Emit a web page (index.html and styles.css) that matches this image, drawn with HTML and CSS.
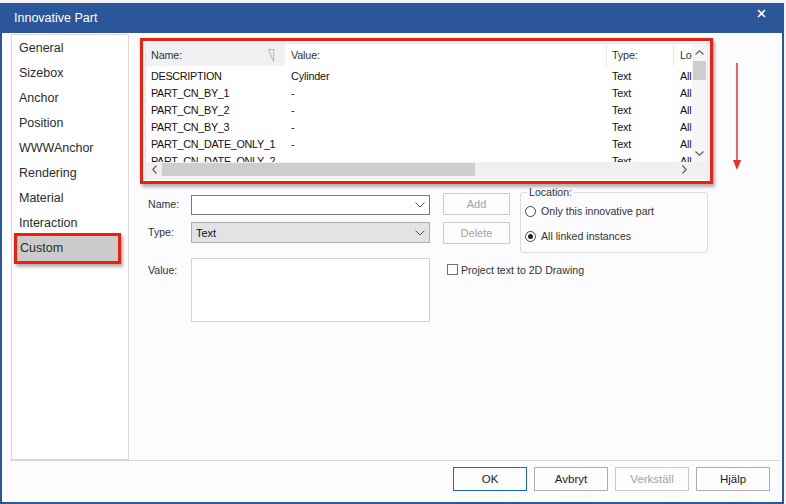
FILE: index.html
```html
<!DOCTYPE html>
<html>
<head>
<meta charset="utf-8">
<link rel="stylesheet" href="styles.css">
</head>
<body>
<div class="window">
  <div class="titlebar">
    <span class="title">Innovative Part</span>
    <svg class="close" width="9" height="9" viewBox="0 0 9 9"><path d="M1 1L8 8M8 1L1 8" stroke="#fff" stroke-width="1.6" fill="none"/></svg>
  </div>
  <div class="main">
    <ul class="nav">
      <li class="nav-item">General</li>
      <li class="nav-item">Sizebox</li>
      <li class="nav-item">Anchor</li>
      <li class="nav-item">Position</li>
      <li class="nav-item">WWWAnchor</li>
      <li class="nav-item">Rendering</li>
      <li class="nav-item">Material</li>
      <li class="nav-item">Interaction</li>
      <li class="nav-item nav-selected">Custom</li>
    </ul>
    <div class="content">
      <div class="annot table-annot">
        <div class="listview">
          <div class="lv-table">
            <div class="lv-header">
              <div class="hcell c-name hover">Name:<svg class="sort" width="7" height="13" viewBox="0 0 7 13"><path d="M0.5 0.5H6L5.5 12.5Z" fill="none" stroke="#b4b4b4" stroke-width="1"/></svg></div>
              <div class="hcell c-value">Value:</div>
              <div class="hcell c-type">Type:</div>
              <div class="hcell c-loc">Location:</div>
            </div>
            <div class="lv-rows">
              <div class="row"><span class="cell c-name">DESCRIPTION</span><span class="cell c-value">Cylinder</span><span class="cell c-type">Text</span><span class="cell c-loc">All</span></div>
              <div class="row"><span class="cell c-name">PART_CN_BY_1</span><span class="cell c-value">-</span><span class="cell c-type">Text</span><span class="cell c-loc">All</span></div>
              <div class="row"><span class="cell c-name">PART_CN_BY_2</span><span class="cell c-value">-</span><span class="cell c-type">Text</span><span class="cell c-loc">All</span></div>
              <div class="row"><span class="cell c-name">PART_CN_BY_3</span><span class="cell c-value">-</span><span class="cell c-type">Text</span><span class="cell c-loc">All</span></div>
              <div class="row"><span class="cell c-name">PART_CN_DATE_ONLY_1</span><span class="cell c-value">-</span><span class="cell c-type">Text</span><span class="cell c-loc">All</span></div>
              <div class="row"><span class="cell c-name">PART_CN_DATE_ONLY_2</span><span class="cell c-value">-</span><span class="cell c-type">Text</span><span class="cell c-loc">All</span></div>
            </div>
          </div>
          <div class="vscroll">
            <div class="sb-btn"><svg width="9" height="5" viewBox="0 0 9 5"><path d="M0.5 4.5L4.5 0.8L8.5 4.5" fill="none" stroke="#606060" stroke-width="1.2"/></svg></div>
            <div class="v-thumb"></div>
            <div class="v-track"></div>
            <div class="sb-btn"><svg width="9" height="5" viewBox="0 0 9 5"><path d="M0.5 0.5L4.5 4.2L8.5 0.5" fill="none" stroke="#606060" stroke-width="1.2"/></svg></div>
          </div>
          <div class="hscroll">
            <div class="sb-btn h"><svg width="5" height="9" viewBox="0 0 5 9"><path d="M4.5 0.5L0.8 4.5L4.5 8.5" fill="none" stroke="#606060" stroke-width="1.2"/></svg></div>
            <div class="h-thumb"></div>
            <div class="h-track"></div>
            <div class="sb-btn h"><svg width="5" height="9" viewBox="0 0 5 9"><path d="M0.5 0.5L4.2 4.5L0.5 8.5" fill="none" stroke="#606060" stroke-width="1.2"/></svg></div>
          </div>
          <div class="corner"></div>
        </div>
      </div>

      <div class="form">
        <label class="flabel r1">Name:</label>
        <div class="combo name-combo r1">
          <span></span>
          <svg width="10" height="6" viewBox="0 0 10 6"><path d="M0.5 0.5L5 5L9.5 0.5" fill="none" stroke="#555" stroke-width="1"/></svg>
        </div>
        <button class="btn side-btn r1 disabled">Add</button>

        <label class="flabel r2">Type:</label>
        <div class="combo type-combo r2">
          <span>Text</span>
          <svg width="10" height="6" viewBox="0 0 10 6"><path d="M0.5 0.5L5 5L9.5 0.5" fill="none" stroke="#555" stroke-width="1"/></svg>
        </div>
        <button class="btn side-btn r2 disabled">Delete</button>

        <fieldset class="location">
          <legend>Location:</legend>
          <div class="radio-row"><span class="radio"></span>Only this innovative part</div>
          <div class="radio-row second"><span class="radio checked"></span>All linked instances</div>
        </fieldset>

        <label class="flabel r3 value-label">Value:</label>
        <div class="textarea r3"></div>
        <div class="check-row r3"><span class="checkbox"></span>Project text to 2D Drawing</div>
      </div>
    </div>
  </div>
  <div class="sep"></div>
  <div class="footer">
    <button class="btn foot-btn default">OK</button>
    <button class="btn foot-btn">Avbryt</button>
    <button class="btn foot-btn disabled">Verkställ</button>
    <button class="btn foot-btn">Hjälp</button>
  </div>
  <svg class="red-arrow" width="12" height="110" viewBox="0 0 12 110"><path d="M6 0V98" stroke="#e8302a" stroke-width="1.5"/><path d="M2 97L10 97L6 107Z" fill="#e8302a"/></svg>
</div>
</body>
</html>
```
FILE: styles.css
```css
* { box-sizing: border-box; }
html, body { margin: 0; padding: 0; }
body {
  background: #f4f4f6;
  font-family: "Liberation Sans", Arial, sans-serif;
  font-size: 12px;
  color: #222;
  width: 786px;
  height: 504px;
  overflow: hidden;
}
.window {
  position: relative;
  margin-top: 3px;
  width: 784px;
  height: 501px;
  background: #fcfcfe;
  border: 2px solid #2b579a;
  border-top: none;
  display: flex;
  flex-direction: column;
}
.titlebar {
  height: 30px;
  background: #2b579a;
  margin: 0 -2px;
  padding: 0 0 0 14px;
  display: flex;
  align-items: center;
  justify-content: space-between;
  flex: none;
}
.title {
  color: #fff;
  font-size: 12.5px;
  padding-top: 0;
}
.close { margin-right: 18px; margin-top: -9px; }

.main {
  height: 427px;
  flex: none;
  display: flex;
  padding: 1px 0 0 9px;
}
.nav {
  list-style: none;
  margin: 0;
  padding: 1px 0 0 0;
  width: 118px;
  height: 426px;
  border: 1px solid #d9d9d9;
  background: #fff;
  flex: none;
}
.nav-item {
  height: 25px;
  line-height: 25px;
  padding-left: 7px;
  color: #2b2b2b;
  font-size: 12.5px;
}
.nav-selected {
  margin: -3px 0 0 2px;
  width: 107px;
  height: 31px;
  line-height: 25px;
  border: 3px solid #f21d0e;
  background: #cbcbcb;
  padding-left: 3px;
  box-shadow: 2px 3px 3px rgba(0,0,0,0.3);
}

.content {
  flex: 1;
  padding-left: 11px;
  padding-top: 4px;
}
.annot {
  border: 3px solid #f21d0e;
  box-shadow: 2px 3px 3px rgba(0,0,0,0.3);
}
.table-annot {
  width: 573px;
  height: 146px;
  padding: 2px;
  background: #fff;
}
.listview {
  width: 563px;
  height: 136px;
  border: 1px solid #e6e6e6;
  display: grid;
  grid-template-columns: 546px 15px;
  grid-template-rows: 118px 15px;
  background: #fff;
}
.lv-table {
  overflow: hidden;
  font-size: 10.8px;
  letter-spacing: -0.15px;
  color: #111;
}
.lv-header {
  height: 22px;
  display: flex;
  white-space: nowrap;
}
.hcell {
  height: 22px;
  line-height: 23px;
  padding-left: 5px;
  border-right: 1px solid #e8e8e8;
  color: #333;
  flex: none;
  overflow: hidden;
  position: relative;
}
.hcell.hover { background: #f1f1f3; border-right-color: #f1f1f3; }
.sort { position: absolute; left: 122px; top: 5px; }
.c-name { width: 139px; }
.c-value { width: 322px; padding-left: 6px; }
.c-type { width: 67px; }
.c-loc { width: 40px; padding-left: 6px; }
.lv-rows { padding-top: 2px; }
.row {
  height: 17px;
  line-height: 17px;
  display: flex;
  white-space: nowrap;
}
.cell {
  flex: none;
  padding-left: 5px;
  overflow: hidden;
}
.cell.c-name { overflow: visible; letter-spacing: -0.3px; }
.cell.c-value, .cell.c-loc { padding-left: 6px; }

.vscroll {
  display: flex;
  flex-direction: column;
  background: #f6f6f6;
}
.sb-btn {
  height: 17px;
  display: flex;
  align-items: center;
  justify-content: center;
  flex: none;
}
.sb-btn.h { width: 16px; height: 15px; }
.v-thumb { height: 19px; background: #cdcdcd; margin: 0 1px; flex: none; }
.v-track { flex: 1; }
.hscroll {
  display: flex;
  background: #f0f0f0;
}
.h-thumb { width: 313px; background: #cdcdcd; margin: 1px 0; flex: none; }
.h-track { flex: 1; }
.corner { background: #f0f0f0; }

.form {
  margin-top: 7px;
  margin-left: 8px;
  display: grid;
  grid-template-columns: 43px 252px 77px 188px;
  grid-template-rows: 27px 29px 75px;
  color: #333;
  font-size: 10.6px;
}
.flabel { grid-column: 1; }
.r1 { grid-row: 1; }
.r2 { grid-row: 2; }
.r3 { grid-row: 3; }
.flabel.r1 { margin-top: 7px; }
.flabel.r2 { margin-top: 8px; }
.value-label { margin-top: 17px; }
.combo {
  grid-column: 2;
  width: 239px;
  display: flex;
  align-items: center;
  justify-content: space-between;
  padding: 0 4px 0 4px;
  font-size: 11px;
}
.name-combo {
  margin-top: 4px;
  height: 20px;
  border: 1px solid #7a7a7a;
  background: #fff;
}
.type-combo {
  margin-top: 4px;
  height: 21px;
  border: 1px solid #adadad;
  background: #e3e3e5;
  color: #111;
}
.textarea {
  grid-column: 2;
  width: 239px;
  height: 64px;
  margin-top: 11px;
  border: 1px solid #d2d2d2;
  background: #fff;
}
.btn {
  font-family: "Liberation Sans", Arial, sans-serif;
  font-size: 11.5px;
  background: #fdfdfd;
  border: 1px solid #adadad;
  color: #222;
  padding: 0;
  margin: 0;
}
.btn.disabled { color: #a3a3a3; border-color: #cccccc; }
.side-btn {
  grid-column: 3;
  width: 67px;
  height: 22px;
  font-size: 11px;
}
.side-btn.r1 { margin-top: 2px; }
.side-btn.r2 { margin-top: 4px; }

.location {
  grid-column: 4;
  grid-row: 1 / 3;
  margin: -6px 0 0 0;
  height: 68px;
  width: 188px;
  border: 1px solid #dcdcdc;
  border-radius: 3px;
  padding: 0 0 0 6px;
  min-width: 0;
}
.location legend {
  padding: 0 2px;
  line-height: 14px;
  color: #333;
}
.radio-row {
  display: flex;
  align-items: center;
  height: 14px;
  margin-top: 5px;
  margin-left: -2px;
}
.radio-row.second { margin-top: 11px; }
.radio {
  width: 11px;
  height: 11px;
  border: 1px solid #444;
  border-radius: 50%;
  margin-right: 5px;
  display: flex;
  align-items: center;
  justify-content: center;
  flex: none;
  background: #fff;
}
.radio.checked::after {
  content: "";
  width: 5px;
  height: 5px;
  border-radius: 50%;
  background: #222;
}
.check-row {
  grid-column: 3 / 5;
  margin-left: 4px;
  margin-top: 17px;
  height: 11px;
  display: flex;
  align-items: center;
  white-space: nowrap;
}
.checkbox {
  width: 11px;
  height: 11px;
  border: 1px solid #6f6f6f;
  background: #fff;
  margin-right: 3px;
  flex: none;
}

.sep {
  height: 1px;
  background: #d6d6d6;
  margin: 0 2px 0 8px;
  flex: none;
}
.footer {
  flex: 1;
  display: flex;
  justify-content: flex-end;
  gap: 7px;
  padding: 6px 12px 0 0;
}
.foot-btn {
  width: 74px;
  height: 24px;
}
.foot-btn.default { border-color: #1a66b3; }

.red-arrow {
  position: absolute;
  left: 729px;
  top: 60px;
}
```
